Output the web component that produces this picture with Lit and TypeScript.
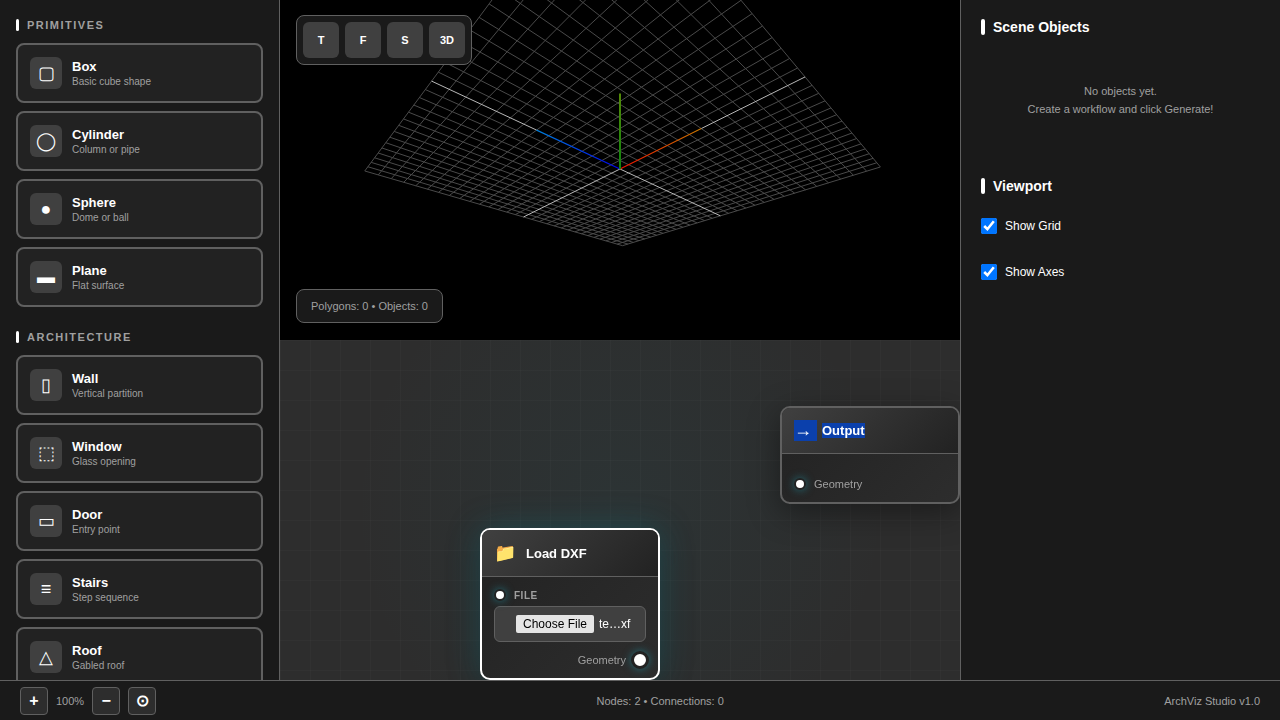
import { LitElement, html, svg, css } from "lit";
import { customElement } from "lit/decorators.js";

type Vec3 = [number, number, number];

interface Tool {
  icon: string;
  name: string;
  desc: string;
}

const PRIMITIVES: Tool[] = [
  { icon: "▢", name: "Box", desc: "Basic cube shape" },
  { icon: "◯", name: "Cylinder", desc: "Column or pipe" },
  { icon: "●", name: "Sphere", desc: "Dome or ball" },
  { icon: "▬", name: "Plane", desc: "Flat surface" },
];

const ARCHITECTURE: Tool[] = [
  { icon: "▯", name: "Wall", desc: "Vertical partition" },
  { icon: "⬚", name: "Window", desc: "Glass opening" },
  { icon: "▭", name: "Door", desc: "Entry point" },
  { icon: "≡", name: "Stairs", desc: "Step sequence" },
  { icon: "△", name: "Roof", desc: "Gabled roof" },
];

// Orbit camera that looks up at the origin from under the ground plane.
const WIDTH = 680;
const HEIGHT = 340;
const FOCAL = 364.6;
const DISTANCE = 30;
const AZIMUTH = (45.92 * Math.PI) / 180;
const ELEVATION = (28.8 * Math.PI) / 180;
const HALF = 15;
const AXIS = 8;

function project([x, y, z]: Vec3): [number, number] {
  const sa = Math.sin(AZIMUTH);
  const ca = Math.cos(AZIMUTH);
  const se = Math.sin(ELEVATION);
  const ce = Math.cos(ELEVATION);
  const right = x * ca - z * sa;
  const up = x * se * sa + y * ce + z * se * ca;
  const depth = DISTANCE - (x * ce * sa - y * se + z * ce * ca);
  return [WIDTH / 2 + (FOCAL * right) / depth, HEIGHT / 2 - 1 - (FOCAL * up) / depth];
}

function segment(a: Vec3, b: Vec3): string {
  const [x1, y1] = project(a);
  const [x2, y2] = project(b);
  return `M${x1.toFixed(2)} ${y1.toFixed(2)}L${x2.toFixed(2)} ${y2.toFixed(2)}`;
}

@customElement("scene-view")
class SceneView extends LitElement {
  static styles = css`
    :host { display: block; }
    svg { display: block; }
    .grid { stroke: #4a4a4a; stroke-width: 1; fill: none; }
    .center { stroke: #b8b8b8; stroke-width: 1; fill: none; }
    .axis { stroke-width: 1.2; }
    .axis.up { stroke-width: 2; }
  `;

  private axis(id: string, kind: string, end: Vec3, from: string, to: string) {
    const [x1, y1] = project([0, 0, 0]);
    const [x2, y2] = project(end);
    return svg`
      <linearGradient id=${id} gradientUnits="userSpaceOnUse" x1=${x1} y1=${y1} x2=${x2} y2=${y2}>
        <stop offset="0" stop-color=${from}></stop>
        <stop offset="1" stop-color=${to}></stop>
      </linearGradient>
      <path class=${kind} d=${`M${x1} ${y1}L${x2 + 0.01} ${y2}`} stroke=${`url(#${id})`}></path>`;
  }

  render() {
    let lines = "";
    for (let i = -HALF; i <= HALF; i++) {
      if (i === 0) continue;
      lines += segment([i, 0, -HALF], [i, 0, HALF]) + segment([-HALF, 0, i], [HALF, 0, i]);
    }
    const center = [
      segment([0, 0, -HALF], [0, 0, 0]),
      segment([0, 0, AXIS], [0, 0, HALF]),
      segment([-HALF, 0, 0], [0, 0, 0]),
      segment([AXIS, 0, 0], [HALF, 0, 0]),
    ].join("");
    return html`<svg width=${WIDTH} height=${HEIGHT} viewBox="0 0 ${WIDTH} ${HEIGHT}">
      <path class="grid" d=${lines}></path>
      <path class="center" d=${center}></path>
      ${this.axis("ax", "axis", [AXIS, 0, 0], "#f01000", "#c87800")}
      ${this.axis("az", "axis", [0, 0, AXIS], "#0000f0", "#0080d8")}
      ${this.axis("ay", "axis up", [0, AXIS, 0], "#0d850d", "#548a08")}
    </svg>`;
  }
}

@customElement("app-root")
class AppRoot extends LitElement {
  static styles = css`
    :host {
      display: flex;
      flex-direction: column;
      width: 1280px;
      height: 720px;
      overflow: hidden;
      background: #1a1a1a;
      color: #fff;
      font-family: "Liberation Sans", Arial, sans-serif;
      font-size: 12px;
    }
    * { box-sizing: border-box; }
    .main { flex: 1; min-height: 0; display: grid; grid-template-columns: 280px 680px 320px; }

    .tools {
      min-height: 0;
      overflow: hidden;
      border-right: 1px solid #606060;
      padding: 19px 16px 0;
      display: flex;
      flex-direction: column;
      gap: 24px;
    }
    .group { display: flex; flex-direction: column; gap: 8px; flex: none; }
    .group-title {
      display: flex;
      align-items: center;
      gap: 8px;
      height: 12px;
      margin-bottom: 4px;
      font-size: 11px;
      font-weight: 700;
      letter-spacing: 1.5px;
      color: #a0a0a0;
    }
    .group-title::before { content: ""; width: 3px; height: 12px; border-radius: 2px; background: #fff; }
    .tool {
      display: flex;
      align-items: center;
      gap: 10px;
      height: 60px;
      padding: 0 12px;
      border: 2px solid #606060;
      border-radius: 8px;
      background: #222;
    }
    .tool-icon {
      width: 32px;
      height: 32px;
      border-radius: 6px;
      background: #404040;
      display: flex;
      align-items: center;
      justify-content: center;
      font-size: 18px;
    }
    .tool-text { padding-top: 2px; }
    .tool-name { font-size: 13px; font-weight: 700; line-height: 15px; }
    .tool-desc { font-size: 10px; line-height: 15px; color: #a0a0a0; }

    .center { display: grid; grid-template-rows: 340px 340px; min-height: 0; }
    .viewport { position: relative; background: #000; overflow: hidden; }
    .views {
      position: absolute;
      left: 16px;
      top: 15px;
      display: flex;
      gap: 6px;
      padding: 6px;
      border: 1px solid #606060;
      border-radius: 8px;
      background: #1a1a1a;
    }
    .view {
      width: 36px;
      height: 36px;
      border-radius: 6px;
      background: #404040;
      display: flex;
      align-items: center;
      justify-content: center;
      font-size: 11px;
      font-weight: 700;
    }
    .stats {
      position: absolute;
      left: 16px;
      top: 289px;
      height: 34px;
      padding: 0 14px;
      display: flex;
      align-items: center;
      border: 1px solid #606060;
      border-radius: 8px;
      background: #1a1a1a;
      color: #a0a0a0;
      font-size: 11px;
    }

    .graph {
      position: relative;
      overflow: hidden;
      will-change: transform;
      background:
        linear-gradient(rgba(255, 255, 255, 0.02) 1px, transparent 1px) 0 0 / 30px 30px,
        linear-gradient(90deg, rgba(255, 255, 255, 0.02) 1px, transparent 1px) 0 0 / 30px 30px,
        radial-gradient(circle at 50% 50%, rgba(32, 128, 141, 0.08), transparent 70%),
        #2d2d2d;
    }
    .node {
      position: absolute;
      width: 180px;
      border: 2px solid #606060;
      border-radius: 10px;
      background: linear-gradient(135deg, #222, #2d2d2d);
      box-shadow: 0 8px 32px rgba(0, 0, 0, 0.4);
    }
    .node-output { left: 500px; top: 66px; height: 98px; }
    .node-load {
      left: 200px;
      top: 188px;
      height: 152px;
      border-color: #fff;
      box-shadow: 0 0 32px rgba(32, 128, 141, 0.4), 0 8px 32px rgba(0, 0, 0, 0.3);
    }
    .node-head {
      display: flex;
      align-items: center;
      gap: 8px;
      padding: 0 12px;
      height: 47px;
      border-bottom: 1px solid #606060;
      border-radius: 8px 8px 0 0;
      background: linear-gradient(135deg, #404040, #222);
      font-size: 13px;
      font-weight: 700;
    }
    .node-output .node-head { height: 46px; gap: 5px; }
    .node-icon { font-size: 18px; font-weight: 400; width: 24px; line-height: 21px; }
    .selected { background: #0b40ac; }
    .node-icon.selected { width: 23px; }
    .label.selected { line-height: 15px; }
    .row { display: flex; align-items: center; gap: 8px; color: #a0a0a0; font-size: 11px; }
    .node-output .row { padding: 24px 12px 0; }
    .file-row { padding: 12px 12px 5px; font-size: 10px; font-weight: 700; letter-spacing: 0.5px; }
    .port {
      width: 12px;
      height: 12px;
      border: 2px solid #222;
      border-radius: 50%;
      background: #fff;
      box-shadow: 0 0 8px rgba(32, 128, 141, 0.8);
    }
    .port.big { width: 18px; height: 18px; border-width: 3px; }
    .file {
      margin: 0 12px;
      height: 36px;
      border: 1px solid #606060;
      border-radius: 6px;
      background: #404040;
      display: flex;
      align-items: center;
      padding-left: 21px;
      gap: 5px;
      font-size: 12px;
    }
    .choose {
      height: 18px;
      width: 78px;
      border-radius: 2px;
      background: #e5e5e5;
      color: #000;
      display: flex;
      align-items: center;
      justify-content: center;
    }
    .out-row { justify-content: flex-end; padding: 9px 9px 0; gap: 5px; }

    .side { border-left: 1px solid #606060; padding: 19px 20px 0; display: flex; flex-direction: column; }
    .side-title { display: flex; align-items: center; gap: 8px; height: 16px; font-size: 14px; font-weight: 700; }
    .side-title::before { content: ""; width: 4px; height: 16px; border-radius: 2px; background: #fff; }
    .empty { margin: 47px 0 60px; text-align: center; color: #a0a0a0; font-size: 11px; line-height: 18px; }
    .check { display: flex; align-items: center; gap: 8px; height: 16px; font-size: 12px; margin-top: 30px; }
    .check.first { margin-top: 24px; }
    .check input { width: 16px; height: 16px; margin: 0; }

    .status {
      height: 40px;
      border-top: 1px solid #606060;
      padding: 0 20px;
      display: flex;
      justify-content: space-between;
      align-items: center;
      font-size: 11px;
      color: #a0a0a0;
    }
    .zoom { display: flex; align-items: center; gap: 8px; }
    .zoom-btn {
      width: 28px;
      height: 28px;
      border: 1px solid #606060;
      border-radius: 4px;
      background: #2d2d2d;
      color: #fff;
      display: flex;
      align-items: center;
      justify-content: center;
      font-size: 16px;
      font-weight: 700;
    }
  `;

  private group(title: string, tools: Tool[]) {
    return html`<section class="group">
      <div class="group-title">${title}</div>
      ${tools.map(
        (t) => html`<div class="tool">
          <div class="tool-icon">${t.icon}</div>
          <div class="tool-text">
            <div class="tool-name">${t.name}</div>
            <div class="tool-desc">${t.desc}</div>
          </div>
        </div>`,
      )}
    </section>`;
  }

  render() {
    return html`
      <div class="main">
        <aside class="tools">
          ${this.group("PRIMITIVES", PRIMITIVES)} ${this.group("ARCHITECTURE", ARCHITECTURE)}
        </aside>
        <div class="center">
          <div class="viewport">
            <scene-view></scene-view>
            <div class="views">${["T", "F", "S", "3D"].map((v) => html`<div class="view">${v}</div>`)}</div>
            <div class="stats">Polygons: 0 • Objects: 0</div>
          </div>
          <div class="graph">
            <div class="node node-output">
              <div class="node-head">
                <span class="node-icon selected">→</span><span class="label selected">Output</span>
              </div>
              <div class="row"><span class="port"></span>Geometry</div>
            </div>
            <div class="node node-load">
              <div class="node-head"><span class="node-icon">📁</span><span class="label">Load DXF</span></div>
              <div class="row file-row"><span class="port"></span>FILE</div>
              <div class="file"><span class="choose">Choose File</span><span>te…xf</span></div>
              <div class="row out-row">Geometry<span class="port big"></span></div>
            </div>
          </div>
        </div>
        <aside class="side">
          <div class="side-title">Scene Objects</div>
          <div class="empty">No objects yet.<br />Create a workflow and click Generate!</div>
          <div class="side-title">Viewport</div>
          <label class="check first"><input type="checkbox" checked />Show Grid</label>
          <label class="check"><input type="checkbox" checked />Show Axes</label>
        </aside>
      </div>
      <footer class="status">
        <div class="zoom">
          <div class="zoom-btn">+</div>
          <span>100%</span>
          <div class="zoom-btn">−</div>
          <div class="zoom-btn">⊙</div>
        </div>
        <div>Nodes: 2 • Connections: 0</div>
        <div>ArchViz Studio v1.0</div>
      </footer>
    `;
  }
}
